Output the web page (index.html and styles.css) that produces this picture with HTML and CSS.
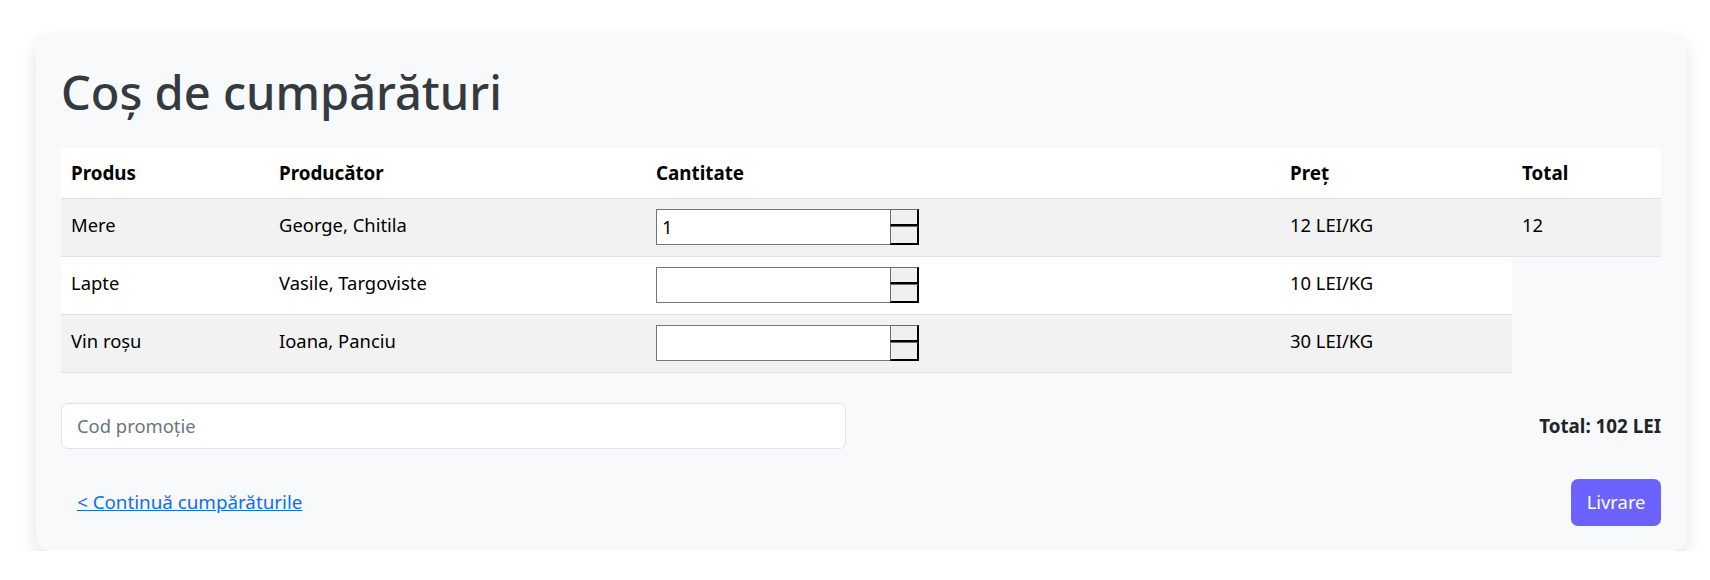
FILE: index.html
```html
<!DOCTYPE html>
<html lang="ro">
<head>
<meta charset="utf-8">
<title>Coș de cumpărături</title>
<link rel="stylesheet" href="styles.css">
</head>
<body>
<main class="card">
  <h1 class="title">Coș de cumpărături</h1>
  <table class="cart">
    <colgroup>
      <col class="c-prod"><col class="c-producer"><col class="c-qty"><col class="c-price"><col class="c-total">
    </colgroup>
    <thead>
      <tr><th>Produs</th><th>Producător</th><th>Cantitate</th><th>Preț</th><th>Total</th></tr>
    </thead>
    <tbody>
      <tr class="odd">
        <td class="txt">Mere</td>
        <td class="txt">George, Chitila</td>
        <td><span class="qty"><input class="qty-field" type="text" value="1"><span class="spin"><span class="spin-up"></span><span class="spin-down"></span></span></span></td>
        <td class="txt">12 LEI/KG</td>
        <td class="txt">12</td>
      </tr>
      <tr class="even">
        <td class="txt">Lapte</td>
        <td class="txt">Vasile, Targoviste</td>
        <td><span class="qty"><input class="qty-field" type="text" value=""><span class="spin"><span class="spin-up"></span><span class="spin-down"></span></span></span></td>
        <td class="txt">10 LEI/KG</td>
      </tr>
      <tr class="odd">
        <td class="txt">Vin roșu</td>
        <td class="txt">Ioana, Panciu</td>
        <td><span class="qty"><input class="qty-field" type="text" value=""><span class="spin"><span class="spin-up"></span><span class="spin-down"></span></span></span></td>
        <td class="txt">30 LEI/KG</td>
      </tr>
    </tbody>
  </table>
  <div class="promo-row">
    <input class="promo" type="text" placeholder="Cod promoție">
    <div class="grand-total">Total: 102 LEI</div>
  </div>
  <div class="actions">
    <a class="back-link" href="#">&lt; Continuă cumpărăturile</a>
    <button class="btn-deliver" type="button">Livrare</button>
  </div>
</main>
</body>
</html>
```
FILE: styles.css
```css
html, body {
  margin: 0;
  padding: 0;
  background: #ffffff;
}
body {
  font-family: "Noto Sans", "Open Sans", sans-serif;
  font-size: 18.4px;
  color: #212529;
}
.card {
  margin: 33px 0 0 36px;
  width: 1650px;
  box-sizing: border-box;
  padding: 25px;
  background: #f8f9fa;
  border-radius: 14px;
  box-shadow: 0 8px 18px rgba(0, 0, 0, 0.11);
}
.title {
  margin: 5px 0 27px;
  font-size: 47px;
  line-height: 58px;
  font-weight: 500;
  color: #343a40;
}
.cart {
  width: 1600px;
  border-collapse: collapse;
  table-layout: fixed;
  color: #000;
}
.c-prod { width: 208px; }
.c-producer { width: 377px; }
.c-qty { width: 634px; }
.c-price { width: 232px; }
.c-total { width: 149px; }
.cart th {
  background: #ffffff;
  height: 50px;
  padding: 0 10px;
  text-align: left;
  font-size: 18.8px;
  font-weight: 700;
  line-height: 24px;
  vertical-align: middle;
  border-bottom: 1px solid #dee2e6;
  box-sizing: border-box;
}
.cart td {
  padding: 10px 10px 11px;
  line-height: 24px;
  vertical-align: middle;
  border-bottom: 1px solid #dee2e6;
}
.cart td.txt {
  padding-top: 8px;
  padding-bottom: 13px;
}
.cart tr.odd td { background: #f2f2f2; }
.cart tr.even td { background: #ffffff; }
.qty {
  display: flex;
  width: 263px;
  height: 36px;
}
.qty-field {
  flex: 1;
  min-width: 0;
  margin: 0;
  height: 36px;
  box-sizing: border-box;
  border: 1px solid #767676;
  border-right: 0;
  padding: 0 5px;
  font-family: "Noto Sans", sans-serif;
  font-size: 18.4px;
  color: #000;
  background: #fff;
  outline: none;
}
.spin {
  display: flex;
  flex-direction: column;
  width: 29px;
  height: 36px;
}
.spin-up, .spin-down {
  display: block;
  box-sizing: border-box;
  background: #f0f0f0;
  border-top: 1px solid #6a6a6a;
  border-left: 1px solid #6a6a6a;
  border-right: 2px solid #000;
  border-bottom: 2px solid #000;
}
.spin-up { height: 17px; }
.spin-down { height: 19px; }
.promo-row {
  margin-top: 30px;
  display: flex;
  align-items: center;
  justify-content: space-between;
}
.promo {
  width: 785px;
  height: 46px;
  box-sizing: border-box;
  margin: 0;
  padding: 0 15px;
  border: 1px solid #dee2e6;
  border-radius: 7px;
  background: #fff;
  font-family: "Noto Sans", sans-serif;
  font-size: 18.4px;
  color: #212529;
  outline: none;
}
.promo::placeholder {
  color: #6c757d;
  opacity: 1;
}
.grand-total {
  font-size: 18.8px;
  font-weight: 700;
  line-height: 24px;
  color: #212529;
}
.actions {
  margin-top: 30px;
  display: flex;
  align-items: center;
  justify-content: space-between;
}
.back-link {
  padding-left: 16px;
  font-size: 18.8px;
  line-height: 24px;
  color: #0d6efd;
  text-decoration: underline;
}
.btn-deliver {
  height: 47px;
  margin: 0;
  padding: 0 15.5px;
  border: 0;
  border-radius: 7px;
  background: #6c63ff;
  color: #fff;
  font-family: "Noto Sans", sans-serif;
  font-size: 18.4px;
  line-height: 24px;
  cursor: pointer;
}
```
